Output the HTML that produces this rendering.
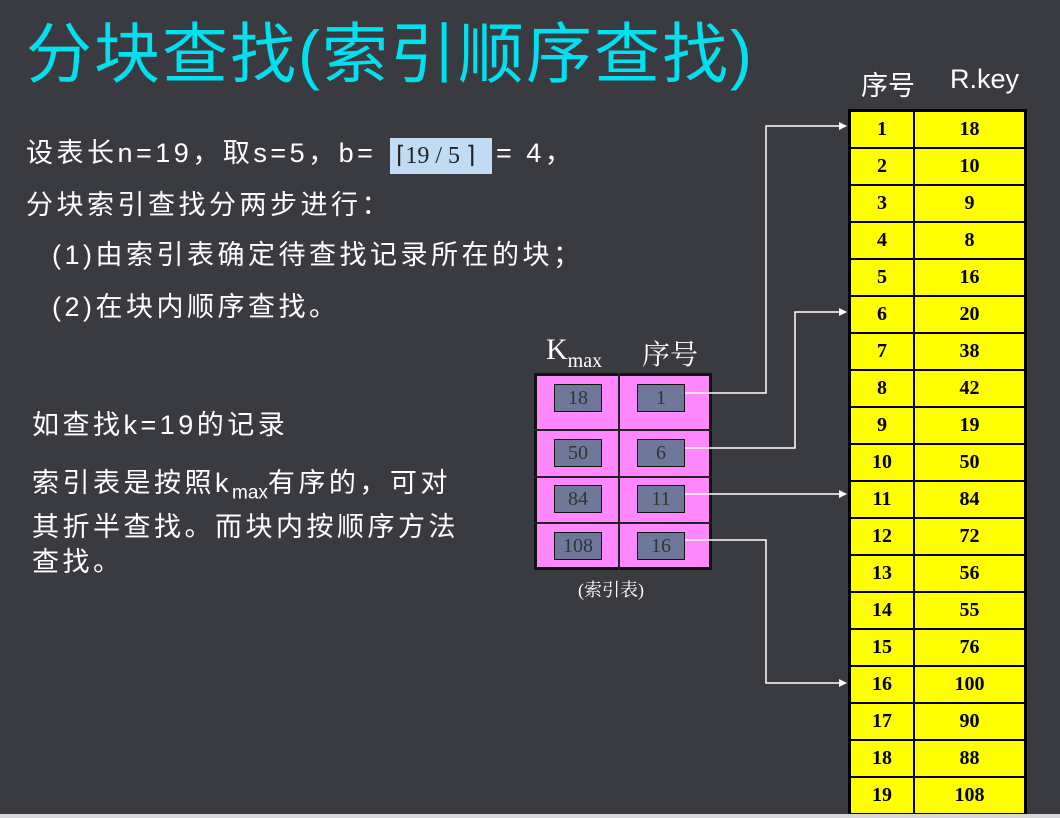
<!DOCTYPE html>
<html><head><meta charset="utf-8"><style>
body{margin:0;width:1060px;height:818px;background:#3a3b40;position:relative;overflow:hidden;font-family:"Liberation Sans","Noto Sans CJK SC",sans-serif;color:#fff}
.a{position:absolute;white-space:nowrap}
.t{font-size:66px;color:#00e0ee;left:26px;top:14px;letter-spacing:2px;line-height:80px}
.b{font-size:27px;line-height:30px;letter-spacing:3.5px}
.s{font-family:"Liberation Serif","Noto Serif CJK SC",serif}
.cell{position:absolute;border:1px solid #111;background:#70789a;color:#333;font-family:"Liberation Serif",serif;font-size:20px;text-align:center;line-height:26px;width:46px;height:26px}
table.y{position:absolute;left:848px;top:109px;border-collapse:collapse;border:3px solid #000;background:#ff0}
table.y td{border:2px solid #000;height:35px;padding:0;text-align:center;font-family:"Liberation Serif",serif;font-weight:bold;font-size:20px;color:#000}
</style></head><body>
<div class="a t">分块查找(索引顺序查找)</div>
<div class="a b" style="left:26px;top:138px">设表长n=19，取s=5，b=</div>
<span class="a s" style="left:390px;top:138px;background:#bfdcf4;color:#222;font-size:24px;padding:0 6px;height:36px;line-height:36px;width:102px;box-sizing:border-box">⌈19 / 5 ⌉</span>
<div class="a b" style="left:496px;top:138px">= 4，</div>
<div class="a b" style="left:26px;top:190px">分块索引查找分两步进行：</div>
<div class="a b" style="left:52px;top:240px">(1)由索引表确定待查找记录所在的块；</div>
<div class="a b" style="left:52px;top:292px">(2)在块内顺序查找。</div>
<div class="a b" style="left:32px;top:410px">如查找k=19的记录</div>
<div class="a b" style="left:32px;top:466px;line-height:35px">索引表是按照k<sub style="font-size:19px;letter-spacing:0">max</sub>有序的，可对<br>其折半查找。而块内按顺序方法<br>查找。</div>
<div class="a s" style="left:546px;top:333px;font-size:30px">K<span style="font-size:20px;position:relative;top:8px">max</span></div>
<div class="a s" style="left:642px;top:333px;font-size:28px">序号</div>
<div class="a s" style="left:578px;top:576px;font-size:18px">(索引表)</div>
<div class="a" style="left:534px;top:373px;width:172px;height:191px;border:3px solid #111;background:#ff88ff"></div>
<div class="a" style="left:618px;top:373px;width:2px;height:197px;background:#222"></div>
<div class="a" style="left:534px;top:429px;width:178px;height:2px;background:#222"></div>
<div class="a" style="left:534px;top:476px;width:178px;height:2px;background:#222"></div>
<div class="a" style="left:534px;top:522px;width:178px;height:2px;background:#222"></div>
<div class="cell" style="left:554px;top:384px">18</div><div class="cell" style="left:637px;top:384px">1</div>
<div class="cell" style="left:554px;top:439px">50</div><div class="cell" style="left:637px;top:439px">6</div>
<div class="cell" style="left:554px;top:485px">84</div><div class="cell" style="left:637px;top:485px">11</div>
<div class="cell" style="left:554px;top:532px">108</div><div class="cell" style="left:637px;top:532px">16</div>
<svg class="a" style="left:0;top:0" width="1060" height="818"><defs><marker id="m" markerWidth="8" markerHeight="8" refX="7" refY="4" orient="auto" markerUnits="userSpaceOnUse"><path d="M0,0L8,4L0,8z" fill="#fff"/></marker></defs>
<g stroke="#fff" stroke-width="1.5" fill="none">
<path d="M685,393H766V126H846" marker-end="url(#m)"/>
<path d="M685,448H795V312H846" marker-end="url(#m)"/>
<path d="M685,494H846" marker-end="url(#m)"/>
<path d="M685,540H766V683H846" marker-end="url(#m)"/>
</g></svg>
<div class="a" style="left:861px;top:64px;font-size:27px">序号</div>
<div class="a" style="left:950px;top:64px;font-size:27px">R.key</div>
<table class="y">
<tr><td style="width:62px">1</td><td style="width:109px">18</td></tr>
<tr><td>2</td><td>10</td></tr><tr><td>3</td><td>9</td></tr><tr><td>4</td><td>8</td></tr>
<tr><td>5</td><td>16</td></tr><tr><td>6</td><td>20</td></tr><tr><td>7</td><td>38</td></tr>
<tr><td>8</td><td>42</td></tr><tr><td>9</td><td>19</td></tr><tr><td>10</td><td>50</td></tr>
<tr><td>11</td><td>84</td></tr><tr><td>12</td><td>72</td></tr><tr><td>13</td><td>56</td></tr>
<tr><td>14</td><td>55</td></tr><tr><td>15</td><td>76</td></tr><tr><td>16</td><td>100</td></tr>
<tr><td>17</td><td>90</td></tr><tr><td>18</td><td>88</td></tr><tr><td>19</td><td>108</td></tr>
</table>
<div class="a" style="left:0;top:814px;width:1060px;height:4px;background:#d8d8d8"></div>
</body></html>
